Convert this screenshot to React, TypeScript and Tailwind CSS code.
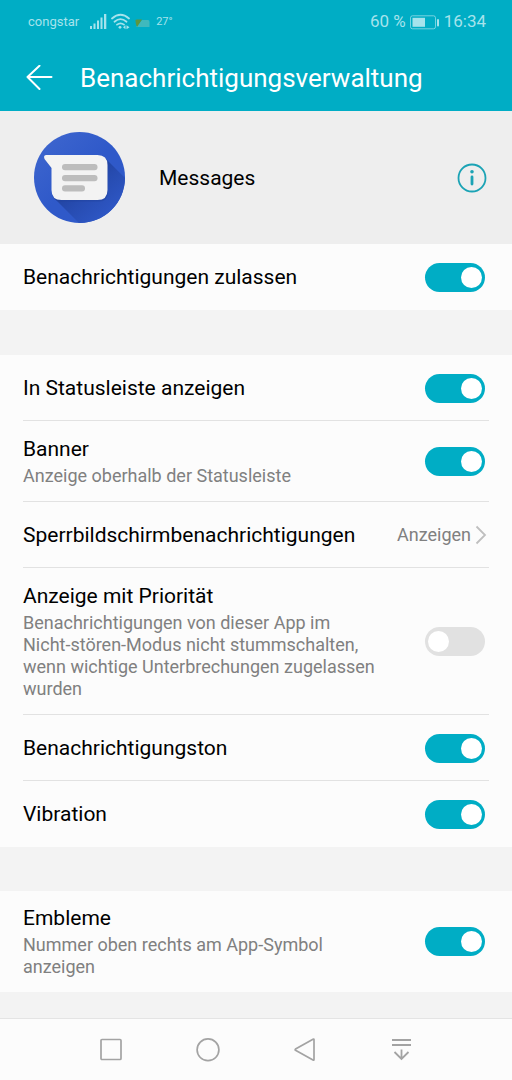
import { useId, useState } from "react";
import type { ReactNode } from "react";

type RowProps = {
  title: string;
  text?: string;
  on?: boolean;
  last?: boolean;
};

// Every row shares the same padding and the divider under its content
function RowBox({ last, children }: { last?: boolean; children: ReactNode }) {
  return (
    <div
      className={
        last
          ? "mx-[23px] flex min-h-[66px] items-center justify-between py-3.5"
          : "mx-[23px] flex min-h-[66px] items-center justify-between border-b border-[#e2e2e2] pt-[15px] pb-[14px]"
      }
    >
      {children}
    </div>
  );
}

function SwitchRow({ title, text, on = false, last }: RowProps) {
  const id = useId();
  const [checked, setChecked] = useState(on);

  return (
    <RowBox last={last}>
      <div className="flex max-w-[366px] flex-1 flex-col gap-[3px]">
        <label htmlFor={id} className="text-[21px] leading-[26px] text-black">
          {title}
        </label>
        {text && (
          <p id={`${id}-text`} className="text-[18px] leading-[22px] whitespace-pre-line text-[#808080]">
            {text}
          </p>
        )}
      </div>
      <input
        id={id}
        type="checkbox"
        role="switch"
        aria-describedby={text ? `${id}-text` : undefined}
        checked={checked}
        onChange={(e) => setChecked(e.target.checked)}
        className="mr-1 flex h-[29px] w-[60px] shrink-0 cursor-pointer appearance-none items-center rounded-full bg-[#e1e1e1] px-[3px] before:block before:size-[21px] before:rounded-full before:bg-white checked:justify-end checked:bg-[#00adc5]"
      />
    </RowBox>
  );
}

function MessagesLogo() {
  return (
    <svg viewBox="0 0 92 92" className="size-[92px]" aria-hidden="true">
      <defs>
        <linearGradient id="disc" x1="0" y1="0" x2="1" y2="1">
          <stop offset="0" stopColor="#4068cf" />
          <stop offset="0.5" stopColor="#2f59c9" />
          <stop offset="1" stopColor="#2f59c8" />
        </linearGradient>
        <linearGradient id="shade" gradientUnits="userSpaceOnUse" x1="46" y1="46" x2="76" y2="82">
          <stop offset="0" stopColor="#2143a0" />
          <stop offset="0.4" stopColor="#274cb1" />
          <stop offset="1" stopColor="#2e57c5" />
        </linearGradient>
        <clipPath id="round">
          <circle cx="45.5" cy="45.5" r="45.5" />
        </clipPath>
      </defs>
      <circle cx="45.5" cy="45.5" r="45.5" fill="url(#disc)" />
      <path d="M71 26 L100 55 V100 H54 L20 66 Z" fill="url(#shade)" clipPath="url(#round)" />
      <path
        d="M13 24 H65 Q74 24 74 33 V60 Q74 69.500 65 69.500 H27 Q18 69.500 18 60 V37 L11 27.500 Q9.500 24 13 24 Z"
        fill="#1f419e"
        opacity="0.5"
      />
      <path
        d="M12.500 23 H63.500 Q73.500 23 73.500 33 V58 Q73.500 68 63.500 68 H27.500 Q17.500 68 17.500 58 V36 L10.500 27 Q9 23 12.500 23 Z"
        fill="#f3f3f3"
      />
      <g fill="#bdbdbd">
        <rect x="28" y="32" width="35.500" height="6.300" rx="3" />
        <rect x="28" y="43" width="35.500" height="6.300" rx="3" />
        <rect x="28" y="53.200" width="23" height="6.300" rx="3" />
      </g>
    </svg>
  );
}

function StatusBar() {
  return (
    <div className="flex h-11 items-center justify-between pr-[26px] pl-7 text-[#a6e3ec]">
      <div className="flex items-center">
        <span className="text-[13px]">congstar</span>
        <svg viewBox="0 0 62 18" className="ml-[11px] h-[18px] w-[62px]" fill="none" aria-hidden="true">
          <g fill="currentColor">
            <rect x="0" y="13" width="2" height="3" />
            <rect x="3.500" y="10.500" width="2" height="5.500" />
            <rect x="7" y="7.500" width="2" height="8.500" />
            <rect x="10.500" y="4.500" width="2" height="11.500" />
            <rect x="14" y="1" width="2.300" height="15" />
          </g>
          <g stroke="currentColor" strokeWidth="1.800" strokeLinecap="round">
            <path d="M22 5.500 Q30.500 -2 39 5.500" />
            <path d="M24.500 8.700 Q30.500 3.500 36.500 8.700" />
            <path d="M27 11.600 Q30.500 9 34 11.600" />
          </g>
          <circle cx="30" cy="14.300" r="1.400" fill="currentColor" />
          <path d="M35.500 12.300 V16.300 L33 14.300 Z M36.500 12.300 V16.300 L39.500 14.300 Z" fill="currentColor" />
          <path d="M46 14 L52 7 H58 Q59.500 7 59.500 9 V14 Z" fill="#3fb9bd" />
          <path d="M45.500 7.500 Q45.500 6.500 47 6.500 H52 L47 14 Q45.500 11.500 45.500 7.500 Z" fill="#5d963f" />
        </svg>
        <span className="ml-1 text-[11px]">27°</span>
      </div>
      <div className="flex items-center text-[17px]">
        <span>60 %</span>
        <svg viewBox="0 0 30 15" className="mx-1 h-[15px] w-[30px]" fill="none" aria-hidden="true">
          <rect x="0.500" y="0.800" width="25" height="13" rx="2" stroke="currentColor" opacity="0.700" />
          <rect x="2.500" y="2.800" width="12.500" height="9" fill="currentColor" />
          <rect x="27" y="4" width="2" height="7.500" rx="1" fill="currentColor" />
        </svg>
        <span>16:34</span>
      </div>
    </div>
  );
}

function NavBar() {
  const button = "flex size-8 items-center justify-center";
  return (
    <nav className="flex h-[62px] items-center justify-around border-t border-[#e4e4e4] bg-[#fcfcfc] px-[62px] text-[#a3a3a3]">
      <button type="button" aria-label="Letzte Apps" className={button}>
        <svg viewBox="0 0 24 24" className="size-6" fill="none" stroke="currentColor" strokeWidth="1.700">
          <rect x="2" y="1.500" width="20" height="20" rx="1" />
        </svg>
      </button>
      <button type="button" aria-label="Startbildschirm" className={button}>
        <svg viewBox="0 0 24 24" className="size-6" fill="none" stroke="currentColor" strokeWidth="1.700">
          <circle cx="12" cy="11.800" r="10.900" />
        </svg>
      </button>
      <button type="button" aria-label="Zurück" className={button}>
        <svg viewBox="0 0 24 24" className="size-6" fill="none" stroke="currentColor" strokeWidth="1.700" strokeLinejoin="round">
          <path d="M21 1.600 V21.600 Q21 22.600 20 22 L2.500 12.300 Q1.800 11.700 2.500 11.100 L20 1.200 Q21 0.800 21 1.600 Z" />
        </svg>
      </button>
      <button type="button" aria-label="Benachrichtigungen öffnen" className={button}>
        <svg viewBox="0 0 24 24" className="size-6" fill="none" stroke="currentColor" strokeWidth="1.800">
          <path d="M2 2 H21 M2 7 H21 M11.500 11.500 V21.500 M4.500 14 L11.500 21 L18.500 14" />
        </svg>
      </button>
    </nav>
  );
}

export default function App() {
  return (
    <div className="flex min-h-screen flex-col bg-[#f3f3f3] font-['Roboto',sans-serif]">
      <header className="bg-[#00adc5]">
        <StatusBar />
        <div className="flex h-[67px] items-center gap-[27px] pl-[26px] text-white">
          <button type="button" aria-label="Zurück">
            <svg viewBox="0 0 27 26" className="h-[26px] w-[27px]" fill="none" stroke="currentColor" strokeWidth="2" strokeLinecap="round" strokeLinejoin="round">
              <path d="M25.500 12 H1.500 M13.500 0.800 L1.500 12 L13.500 24" />
            </svg>
          </button>
          <h1 className="text-[26px] leading-8">Benachrichtigungsverwaltung</h1>
        </div>
      </header>

      <main className="flex-1">
        <section className="flex h-[133px] items-center bg-[#eeeeee] pr-[25px] pl-[34px]">
          <MessagesLogo />
          <h2 className="ml-[33px] flex-1 text-[21px] leading-[26px] text-black">Messages</h2>
          <button type="button" aria-label="App-Info" className="text-[#1ba3b5]">
            <svg viewBox="0 0 30 30" className="size-[30px]" fill="none" aria-hidden="true">
              <circle cx="15" cy="15" r="13.500" stroke="currentColor" strokeWidth="1.800" />
              <circle cx="15" cy="8.700" r="1.800" fill="currentColor" />
              <rect x="13.600" y="12.500" width="2.800" height="10" rx="1.400" fill="currentColor" />
            </svg>
          </button>
        </section>

        <section className="bg-[#fcfcfc]">
          <SwitchRow title="Benachrichtigungen zulassen" on last />
        </section>

        <section className="mt-[45px] bg-[#fcfcfc]">
          <SwitchRow title="In Statusleiste anzeigen" on />
          <SwitchRow title="Banner" text="Anzeige oberhalb der Statusleiste" on />
          <RowBox>
            <span className="text-[21px] leading-[26px] text-black">Sperrbildschirmbenachrichtigungen</span>
            <button type="button" className="mr-0.5 flex items-center gap-1 text-[18px] leading-[22px] text-[#808080]">
              Anzeigen
              <svg viewBox="0 0 12 20" className="h-5 w-3" fill="none" stroke="#bfbfbf" strokeWidth="1.800" aria-hidden="true">
                <path d="M1.500 1.500 L10 10 L1.500 18.500" />
              </svg>
            </button>
          </RowBox>
          <SwitchRow
            title="Anzeige mit Priorität"
            text={"Benachrichtigungen von dieser App im\nNicht-stören-Modus nicht stummschalten, wenn wichtige Unterbrechungen zugelassen wurden"}
          />
          <SwitchRow title="Benachrichtigungston" on />
          <SwitchRow title="Vibration" on last />
        </section>

        <section className="mt-11 bg-[#fcfcfc]">
          <SwitchRow title="Embleme" text="Nummer oben rechts am App-Symbol anzeigen" on last />
        </section>
      </main>

      <NavBar />
    </div>
  );
}
